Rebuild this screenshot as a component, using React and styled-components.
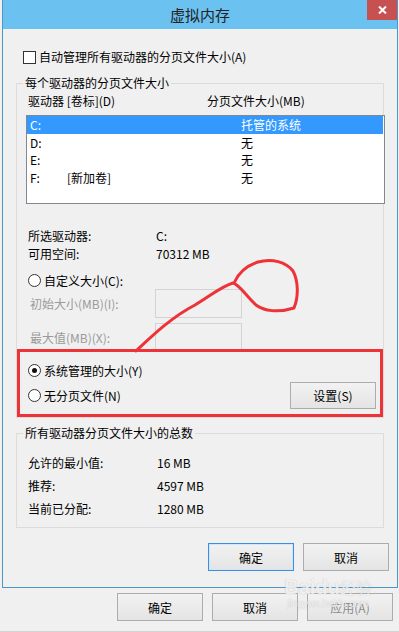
import React from 'react';
import styled, { createGlobalStyle } from 'styled-components';

const GlobalStyle = createGlobalStyle`
  html, body {
    margin: 0;
    padding: 0;
    background: #f0f0f0;
  }
  body {
    font-family: "Noto Sans CJK SC", "Liberation Sans", sans-serif;
    font-size: 12px;
    color: #000;
  }
`;

// 전체 화면
const Screen = styled.div`
  position: relative;
  width: 399px;
  height: 632px;
  overflow: hidden;
  background: #f0f0f0;
  border-bottom: 1px solid #d4d4d4;
  box-sizing: border-box;
`;

// 대화상자 프레임
const Dialog = styled.div`
  margin-left: 2px;
  width: 396px;
  height: 588px;
  box-sizing: border-box;
  border: 1px solid #4a96c8;
  border-top: none;
  background: #f0f0f0;
  display: flex;
  flex-direction: column;
`;

const TitleBar = styled.div`
  position: relative;
  height: 29px;
  flex: none;
  background: #6bc1f0;
  display: flex;
  align-items: center;
  justify-content: center;
  font-size: 15px;
  color: #222;
`;

const CloseButton = styled.div`
  position: absolute;
  top: 0;
  right: 0;
  width: 30px;
  height: 20px;
  background: #c75050;
  display: flex;
  align-items: center;
  justify-content: center;
`;

const Body = styled.div`
  display: flex;
  flex-direction: column;
  padding: 0 12px 0 13px;
`;

const CheckRow = styled.label`
  display: flex;
  align-items: center;
  gap: 3px;
  height: 16px;
  margin-top: 20px;
  padding-left: 7px;
  line-height: 16px;
`;

const CheckBox = styled.span`
  width: 11px;
  height: 11px;
  border: 1px solid #333;
  background: #fff;
  flex: none;
`;

const Group = styled.fieldset`
  margin: ${(p) => p.$top}px 0 0 0;
  padding: 0 0 ${(p) => p.$bottom}px 0;
  width: 368px;
  box-sizing: border-box;
  border: 1px solid #dcdcdc;
  min-width: 0;
  display: flex;
  flex-direction: column;
`;

const Legend = styled.legend`
  margin-left: 6px;
  padding: 0 2px;
  line-height: 16px;
  font-size: 12px;
`;

const HeaderRow = styled.div`
  display: flex;
  margin-top: 2px;
  padding-left: 11px;
  line-height: 16px;
  height: 16px;
`;

const Col = styled.span`
  width: ${(p) => p.$w}px;
  flex: none;
  white-space: nowrap;
`;

const ListBox = styled.div`
  margin: 6px -2px 0 9px;
  height: 89px;
  box-sizing: border-box;
  border: 1px solid #828790;
  background: #fff;
  display: flex;
  flex-direction: column;
`;

const ListRow = styled.div`
  display: flex;
  height: 17.5px;
  line-height: 17.5px;
  flex: none;
  padding-left: 3px;
  margin-right: 1px;
  background: ${(p) => (p.$selected ? '#3399ff' : 'transparent')};
  color: ${(p) => (p.$selected ? '#fff' : '#000')};
`;

const InfoList = styled.div`
  display: flex;
  flex-direction: column;
  margin-top: ${(p) => p.$top}px;
  padding-left: 11px;
`;

const InfoRow = styled.div`
  display: flex;
  height: ${(p) => p.$h}px;
  align-items: center;
  white-space: nowrap;
`;

const RadioRow = styled.label`
  display: flex;
  align-items: center;
  gap: 3px;
  height: ${(p) => p.$h || 18}px;
  margin-top: ${(p) => p.$top || 0}px;
  padding-left: 11px;
  white-space: nowrap;
`;

const Radio = styled.span`
  width: 11px;
  height: 11px;
  border-radius: 50%;
  border: 1px solid #333;
  background: #fff;
  flex: none;
  display: flex;
  align-items: center;
  justify-content: center;

  &::after {
    content: '';
    display: ${(p) => (p.$checked ? 'block' : 'none')};
    width: 5px;
    height: 5px;
    border-radius: 50%;
    background: #111;
  }
`;

const FieldRow = styled.div`
  display: flex;
  align-items: center;
  height: 29px;
  margin-top: ${(p) => p.$top || 0}px;
  padding-left: 13px;
  color: #9a9a9a;
  white-space: nowrap;
`;

const FieldLabel = styled.span`
  width: 125px;
  flex: none;
`;

const TextInput = styled.div`
  width: 87px;
  height: 29px;
  box-sizing: border-box;
  border: 1px solid #d3d3d3;
  background: #f0f0f0;
`;

const SplitRow = styled.div`
  display: flex;
  align-items: center;
  justify-content: space-between;
  margin-top: 3px;
  padding-right: 7px;
`;

const Button = styled.div`
  width: 86px;
  height: ${(p) => p.$h || 28}px;
  box-sizing: border-box;
  border: 1px solid ${(p) => (p.$default ? '#3c8fe0' : '#acacac')};
  box-shadow: ${(p) => (p.$default ? 'inset 0 0 0 1px #cfe6fb' : 'none')};
  background: linear-gradient(#f2f2f2, #e4e4e4);
  display: flex;
  align-items: center;
  justify-content: center;
  color: ${(p) => (p.$disabled ? '#8a8a8a' : '#000')};
  flex: none;
`;

const ButtonBar = styled.div`
  display: flex;
  justify-content: flex-end;
  gap: 9px;
  margin-top: ${(p) => p.$top}px;
  padding-right: ${(p) => p.$right}px;
`;

const Annotation = styled.svg`
  position: absolute;
  left: 0;
  top: 0;
  pointer-events: none;
`;

// 바이두 워터마크
const Watermark = styled.div`
  position: absolute;
  left: 282px;
  top: 576px;
  width: 92px;
  display: flex;
  flex-direction: column;
  align-items: center;
  color: rgba(255, 255, 255, 0.8);
  text-shadow: 0 0 1px rgba(130, 130, 130, 0.55);
  pointer-events: none;
`;

const WatermarkLogo = styled.div`
  font-family: "Liberation Sans", sans-serif;
  font-size: 20px;
  font-weight: bold;
  line-height: 22px;
  white-space: nowrap;

  & > small {
    font-family: "Noto Sans CJK SC", sans-serif;
    font-size: 16px;
    font-weight: normal;
  }
`;

const WatermarkUrl = styled.div`
  font-family: "Liberation Sans", sans-serif;
  font-size: 10px;
  line-height: 12px;
  white-space: nowrap;
`;

const drives = [
  { id: 'C:', label: '', size: '托管的系统', selected: true },
  { id: 'D:', label: '', size: '无' },
  { id: 'E:', label: '', size: '无' },
  { id: 'F:', label: '[新加卷]', size: '无' },
];

const totals = [
  ['允许的最小值:', '16 MB'],
  ['推荐:', '4597 MB'],
  ['当前已分配:', '1280 MB'],
];

const App = () => {
  return (
    <>
      <GlobalStyle />
      <Screen>
        <Dialog>
          <TitleBar>
            虚拟内存
            <CloseButton>
              <svg width="9" height="8" viewBox="0 0 9 8">
                <path d="M1 0.5 L8 7.5 M8 0.5 L1 7.5" stroke="#fff" strokeWidth="2" />
              </svg>
            </CloseButton>
          </TitleBar>

          <Body>
            <CheckRow>
              <CheckBox />
              自动管理所有驱动器的分页文件大小(A)
            </CheckRow>

            {/* 각 드라이브의 페이징 파일 크기 */}
            <Group $top={10} $bottom={8}>
              <Legend>每个驱动器的分页文件大小</Legend>
              <HeaderRow>
                <Col $w={179}>驱动器 [卷标](D)</Col>
                <Col $w={120}>分页文件大小(MB)</Col>
              </HeaderRow>
              <ListBox>
                {drives.map((d) => (
                  <ListRow key={d.id} $selected={d.selected}>
                    <Col $w={37}>{d.id}</Col>
                    <Col $w={174}>{d.label}</Col>
                    <Col $w={100}>{d.size}</Col>
                  </ListRow>
                ))}
              </ListBox>

              <InfoList $top={22}>
                <InfoRow $h={18}>
                  <Col $w={128}>所选驱动器:</Col>
                  C:
                </InfoRow>
                <InfoRow $h={18}>
                  <Col $w={128}>可用空间:</Col>
                  70312 MB
                </InfoRow>
              </InfoList>

              <RadioRow $top={10} $h={17}>
                <Radio />
                自定义大小(C):
              </RadioRow>
              <FieldRow>
                <FieldLabel>初始大小(MB)(I):</FieldLabel>
                <TextInput />
              </FieldRow>
              <FieldRow $top={5}>
                <FieldLabel>最大值(MB)(X):</FieldLabel>
                <TextInput />
              </FieldRow>

              <RadioRow $top={9}>
                <Radio $checked />
                系统管理的大小(Y)
              </RadioRow>
              <SplitRow>
                <RadioRow>
                  <Radio />
                  无分页文件(N)
                </RadioRow>
                <Button $h={27}>设置(S)</Button>
              </SplitRow>
            </Group>

            {/* 모든 드라이브 합계 */}
            <Group $top={7} $bottom={7}>
              <Legend>所有驱动器分页文件大小的总数</Legend>
              <InfoList $top={10}>
                {totals.map(([k, v]) => (
                  <InfoRow key={k} $h={23}>
                    <Col $w={129}>{k}</Col>
                    {v}
                  </InfoRow>
                ))}
              </InfoList>
            </Group>
          </Body>

          <ButtonBar $top={15} $right={8}>
            <Button $default>确定</Button>
            <Button>取消</Button>
          </ButtonBar>
        </Dialog>

        {/* 뒤쪽 창 버튼 */}
        <ButtonBar $top={5} $right={6}>
          <Button>确定</Button>
          <Button>取消</Button>
          <Button $disabled>应用(A)</Button>
        </ButtonBar>

        <Watermark>
          <WatermarkLogo>
            Baidu<small>经验</small>
          </WatermarkLogo>
          <WatermarkUrl>jingyan.baidu.com</WatermarkUrl>
        </Watermark>

        {/* 빨간 표시 */}
        <Annotation width="399" height="632" viewBox="0 0 399 632">
          <rect x="18.5" y="350.5" width="363" height="65" fill="none" stroke="#ee3338" strokeWidth="3" />
          <path
            d="M136 351 C150 338 170 318 195 305 C210 296 222 286 233 283 C240 285 246 296 256 305 C264 311 278 313 294 308 C299 296 298 280 293 271 C286 262 272 258 258 262 C246 266 238 274 234 283"
            fill="none"
            stroke="#ee3338"
            strokeWidth="3"
            strokeLinecap="round"
            strokeLinejoin="round"
          />
        </Annotation>
      </Screen>
    </>
  );
};

export default App;
